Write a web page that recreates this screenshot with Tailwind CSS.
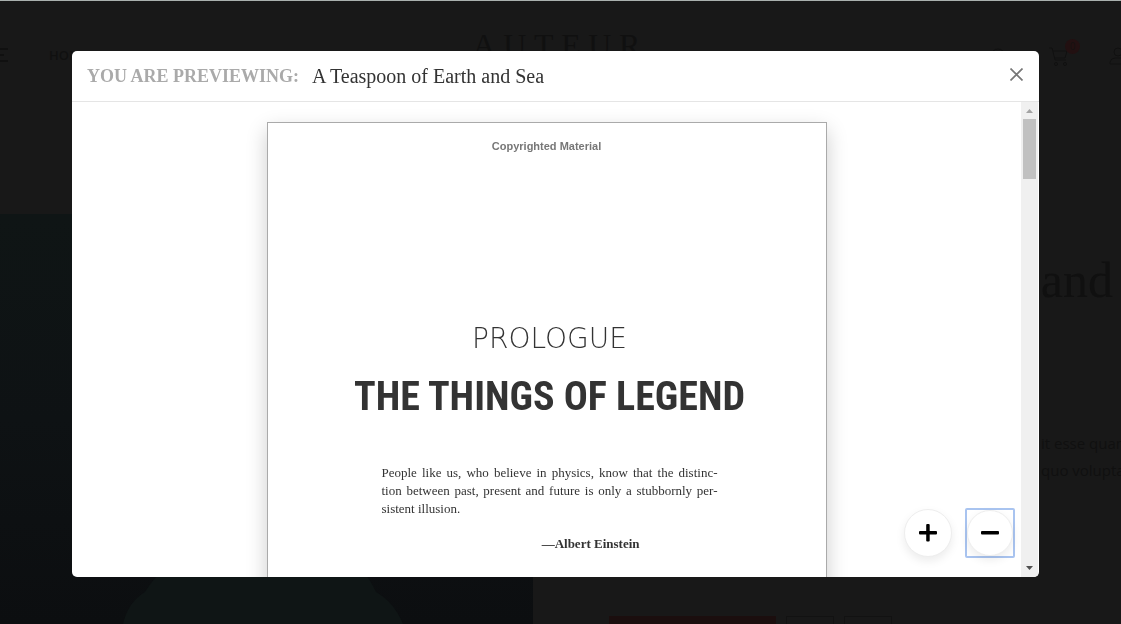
<!DOCTYPE html>
<html lang="en">
<head>
<meta charset="utf-8">
<meta name="viewport" content="width=device-width, initial-scale=1">
<title>Auteur – Book preview</title>
<script src="https://cdn.jsdelivr.net/npm/@tailwindcss/browser@4"></script>
</head>
<body class="h-screen overflow-hidden bg-[#181818] font-['Liberation_Serif',serif] text-[#101010]">

<!-- Dimmed product page -->
<div class="flex h-full flex-col overflow-hidden border-t border-[#a9b0ae]" inert>
  <header class="grid h-[213px] shrink-0 grid-cols-3 items-start pt-6">
    <div class="flex items-center gap-10 pt-5 font-['Open_Sans',sans-serif] text-[13px] leading-5 font-semibold">
      <svg class="h-[14px] w-[9px]" viewBox="0 0 9 14" stroke="currentColor" stroke-width="2"><path d="M0 1h8M0 7h4M0 13h8"/></svg>
      <a href="#">HOME</a>
    </div>
    <a href="#" aria-label="Auteur" class="mr-2 flex w-[168px] justify-between justify-self-center text-[32px] leading-10"><span>A</span><span>U</span><span>T</span><span>E</span><span>U</span><span>R</span></a>
    <div class="-mr-2 flex justify-end gap-10 pt-[18px]">
      <svg class="mt-1 size-5" viewBox="0 0 20 20" fill="none" stroke="currentColor"><circle cx="9" cy="9" r="7"/><path d="m14 14 5 5"/></svg>
      <div class="relative pt-1">
        <svg class="size-5" viewBox="0 0 20 20" fill="none" stroke="currentColor"><path d="M0 1h3l3 12h11M4 4h14l-2 7H6"/><circle cx="7" cy="17" r="1.5"/><circle cx="16" cy="17" r="1.5"/></svg>
        <span class="absolute -top-1 left-4 flex size-[15px] items-center justify-center rounded-full bg-[#221011] font-['Open_Sans',sans-serif] text-[10px] text-[#151010]">0</span>
      </div>
      <svg class="mt-1 size-5" viewBox="0 0 20 20" fill="none" stroke="currentColor"><circle cx="9" cy="5" r="4"/><path d="M1 17v-2q1-4 5-4h6q4 0 5 4v2z"/></svg>
    </div>
  </header>
  <main class="flex min-h-0 flex-1">
    <div class="w-[533px] shrink-0 overflow-hidden bg-linear-to-b from-[#0f1515] via-[#0e1214] to-[#0c0e10]">
      <svg class="h-full w-full" viewBox="0 0 533 410" preserveAspectRatio="none"><path fill="#0f1515" d="M123 410Q128 388 145 378Q162 350 195 335H345Q368 360 376 378Q394 388 403 410z"/></svg>
    </div>
    <div class="flex min-w-0 flex-1 flex-col pl-[76px] pt-10">
      <h1 class="flex w-[504px] justify-end whitespace-nowrap text-[50px] leading-[52px]">and</h1>
      <div class="mt-[124px] ml-[432px] whitespace-nowrap font-['Open_Sans',sans-serif] text-[15px] leading-[27px]">
        <p>it esse quam</p>
        <p>quo voluptas</p>
      </div>
      <div class="mt-[132px] flex gap-[10px]">
        <button class="h-12 w-[167px] bg-[#1b0e0e]"></button>
        <button class="h-12 w-12 border border-[#121212]"></button>
        <button class="h-12 w-12 border border-[#121212]"></button>
      </div>
    </div>
  </main>
</div>

<!-- Preview dialog -->
<div class="fixed inset-0 flex pt-[51px] pr-[82px] pb-[47px] pl-[72px]">
  <section role="dialog" aria-labelledby="preview-title" class="relative flex min-w-0 flex-1 flex-col overflow-hidden rounded-[5px] bg-white">
    <header class="flex shrink-0 items-center justify-between border-b border-[#e5e5e5] px-[15px]">
      <h2 id="preview-title" class="flex gap-[13px] text-[20px] leading-[50px] text-[#333]"><span class="text-[18px] font-bold text-[#aaa]">YOU ARE PREVIEWING:</span><span>A Teaspoon of Earth and Sea</span></h2>
      <button aria-label="Close" class="-mt-1 flex size-[15px] items-center justify-center text-[#777]">
        <svg class="size-[13px]" viewBox="0 0 13 13" stroke="currentColor" stroke-width="1.7"><path d="m.5.5 12 12m0-12-12 12"/></svg>
      </button>
    </header>
    <div class="flex min-h-0 flex-1">
      <div class="min-w-0 flex-1 overflow-hidden px-5 pt-5">
        <article class="mx-auto flex min-h-[760px] w-[560px] flex-col items-center border border-[#aaa] bg-white pl-[6px] text-[#333] shadow-[0_8px_20px_rgba(0,0,0,0.2)]">
          <p class="mt-[15px] mr-[6px] font-['Liberation_Sans',sans-serif] text-[11px] leading-4 font-bold text-[#777]">Copyrighted Material</p>
          <p class="mt-[169px] font-['DejaVu_Sans',sans-serif] text-[28px] leading-[32px] font-extralight">PROLOGUE</p>
          <h3 class="mt-4 whitespace-nowrap font-['Roboto_Condensed','Liberation_Sans_Narrow',sans-serif] text-[40px] leading-[52px] font-bold">THE THINGS OF LEGEND</h3>
          <blockquote class="mt-[41px] w-[336px] text-[13px] leading-[18px]">
            <p class="text-justify [text-align-last:justify]">People like us, who believe in physics, know that the distinc-</p>
            <p class="text-justify [text-align-last:justify]">tion between past, present and future is only a stubbornly per-</p>
            <p>sistent illusion.</p>
            <footer class="mt-[17px] pr-[78px] text-right font-bold">—Albert Einstein</footer>
          </blockquote>
        </article>
      </div>
      <div class="mr-px flex w-[17px] shrink-0 flex-col items-center bg-[#f0f0f0]" aria-hidden="true">
        <svg class="h-[17px] w-[17px] shrink-0" viewBox="0 0 17 17" fill="#a3a3a3"><path d="M5 11h7L8.500 7z"/></svg>
        <div class="h-[60px] w-[13px] bg-[#c1c1c1]"></div>
        <svg class="mt-auto h-[17px] w-[17px] shrink-0" viewBox="0 0 17 17" fill="#505050"><path d="M5 6h7L8.500 10z"/></svg>
      </div>
    </div>
    <div class="absolute right-6 bottom-[19px] flex items-center gap-[13px]">
      <button aria-label="Zoom in" class="flex size-12 items-center justify-center rounded-full border border-[#eee] bg-white text-black shadow-[0_4px_10px_rgba(0,0,0,0.08)]">
        <svg class="size-[18px]" viewBox="0 0 18 18" fill="currentColor"><rect y="7" width="18" height="3.500" rx="1"/><rect x="7.200" width="3.500" height="17.500" rx="1"/></svg>
      </button>
      <div class="rounded-[2px] border-2 border-[#a9c4f0]">
        <button aria-label="Zoom out" class="flex size-[46px] items-center justify-center rounded-full border border-[#eee] bg-white text-black shadow-[0_4px_10px_rgba(0,0,0,0.08)]">
          <svg class="size-[18px]" viewBox="0 0 18 18" fill="currentColor"><rect y="7" width="18" height="3.500" rx="1"/></svg>
        </button>
      </div>
    </div>
  </section>
</div>
</body>
</html>
